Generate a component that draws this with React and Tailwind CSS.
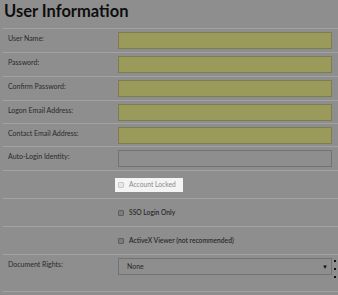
import React from 'react';

const textRows = [
    { label: 'User Name:', h: 'h-[24px]', kind: 'filled' },
    { label: 'Password:', h: 'h-[24px]', kind: 'filled' },
    { label: 'Confirm Password:', h: 'h-[24px]', kind: 'filled' },
    { label: 'Logon Email Address:', h: 'h-[23px]', kind: 'filled' },
    { label: 'Contact Email Address:', h: 'h-[23px]', kind: 'filled' },
    { label: 'Auto-Login Identity:', h: 'h-[24px]', kind: 'empty' },
];

const checkRows = [
    { label: 'Account Locked', highlight: true },
    { label: 'SSO Login Only' },
    { label: 'ActiveX Viewer (not recommended)' },
];

function Field({ kind }) {
    if (kind === 'filled') {
        return <div className="mt-[3px] h-[17px] w-[214px] border border-[#7d7c50] bg-[#9a9a5b]" />;
    }
    return <div className="mt-[3px] h-[17px] w-[214px] border border-[#727272] bg-[#8e8e8e]" />;
}

export default function App() {
    return (
        <div className="h-[295px] w-[338px] overflow-hidden bg-[#8e8e8e] font-['Lato',sans-serif]">
            <h1 className="pl-[4px] pt-[1px] h-[28px] text-[16.5px] font-bold leading-[20px] text-[#0e0e0e]">
                User Information
            </h1>
            <div className="pl-[3px]">
                {textRows.map((row) => (
                    <div key={row.label} className={`flex ${row.h} border-t border-[#a2a2a2]`}>
                        <div className="w-[115px] pl-[5px] pt-[5px] text-[7px] leading-[9px] text-[#2a2a2a]">
                            {row.label}
                        </div>
                        <Field kind={row.kind} />
                    </div>
                ))}
                {checkRows.map((row) => (
                    <div key={row.label} className="flex h-[28px] items-center border-t border-[#a2a2a2] pl-[112px]">
                        <div className={`flex items-center gap-[5px] pl-[3px] pr-[7px] h-[14px] ${row.highlight ? 'bg-[#f4f4f4]' : ''}`}>
                            <span className={`block h-[6px] w-[6px] rounded-[1px] border ${row.highlight ? 'border-[#c8c8c8] bg-[#e6e6e6]' : 'border-[#5e5e5e] bg-[#7c7c7c]'}`} />
                            <span className={`text-[6.7px] leading-[9px] ${row.highlight ? 'text-[#8a8a8a]' : 'text-[#2a2a2a] font-semibold'}`}>
                                {row.label}
                            </span>
                        </div>
                    </div>
                ))}
                <div className="flex h-[38px] border-t border-b border-[#a2a2a2]">
                    <div className="w-[115px] pl-[5px] pt-[5px] text-[7px] leading-[9px] text-[#2a2a2a]">
                        Document Rights:
                    </div>
                    <div className="mt-[3px] flex h-[17px] w-[214px] items-center justify-between border border-[#727272] bg-[#8e8e8e] pl-[8px] pr-[3px]">
                        <span className="text-[7px] leading-[9px] text-[#2a2a2a]">None</span>
                        <span className="text-[6px] leading-[6px] text-[#111]">▼</span>
                    </div>
                    <div className="ml-[2px] flex flex-col gap-[6px] pt-[5px]">
                        <span className="block h-[2px] w-[2px] bg-[#111]" />
                        <span className="block h-[2px] w-[2px] bg-[#111]" />
                        <span className="block h-[2px] w-[2px] bg-[#111]" />
                    </div>
                </div>
            </div>
        </div>
    );
}
